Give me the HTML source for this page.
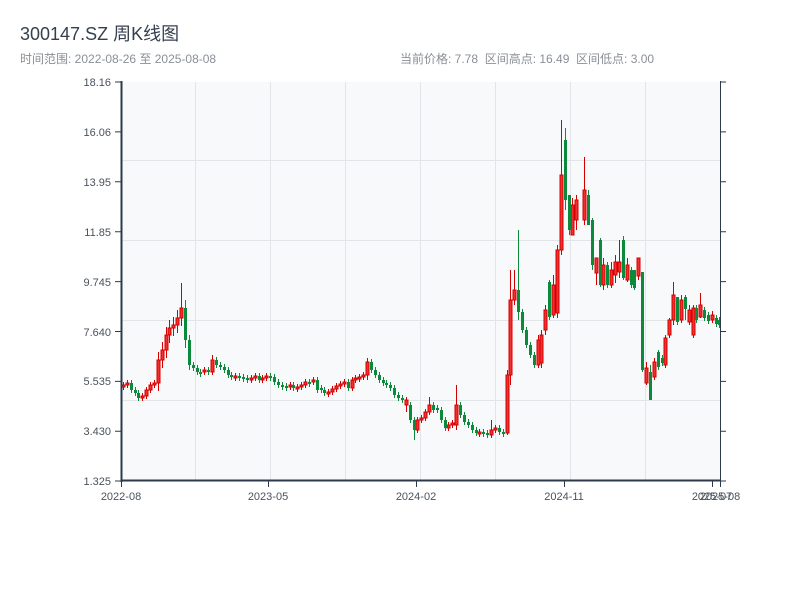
<!DOCTYPE html>
<html><head><meta charset="utf-8"><style>
body{margin:0;width:800px;height:600px;background:#fff;overflow:hidden;font-family:"Liberation Sans","Noto Sans CJK SC",sans-serif;}
.r rect{fill:#ee3030;stroke:#d40000;stroke-width:1}
.g rect{fill:#0a8a3a}
.r path{stroke:#d40000;stroke-width:1;fill:none}
.g path{stroke:#0a8a3a;stroke-width:1;fill:none}
</style></head><body>
<svg width="800" height="600" xmlns="http://www.w3.org/2000/svg" style="position:absolute;left:0;top:0">
<text x="20" y="40" font-size="18" fill="#34404f" font-family="Liberation Sans, Noto Sans CJK SC, sans-serif">300147.SZ 周K线图</text>
<text x="20" y="63" font-size="12" fill="#8a8f96" font-family="Liberation Sans, Noto Sans CJK SC, sans-serif">时间范围: 2022-08-26 至 2025-08-08</text>
<text x="400" y="63" font-size="12" fill="#8a8f96" font-family="Liberation Sans, Noto Sans CJK SC, sans-serif" xml:space="preserve">当前价格: 7.78  区间高点: 16.49  区间低点: 3.00</text>
<rect x="121" y="82" width="599" height="399" fill="#f7f9fb"/>
<g stroke="#e1e4e9" stroke-width="1">
<path d="M195.5 82V481M270.5 82V481M345.5 82V481M420.5 82V481M495.5 82V481M570.5 82V481M645.5 82V481M121 160.5H720M121 240.5H720M121 320.5H720M121 400.5H720" fill="none"/>
</g>
<g class="r">
<path d="M123.5 382V390M127.5 380V388M142.5 393V401M146.5 387V399M150.5 382V393M154.5 380V388M158.5 352V391M162.5 342V368M166.5 327V358M169.5 320V343M173.5 317V336M177.5 310V333M181.5 283V326M204.5 367V375M212.5 355V375M235.5 373V381M251.5 375V383M255.5 373V381M262.5 375V383M266.5 373V381M290.5 382V390M297.5 384V392M301.5 382V390M305.5 379V388M313.5 377V385M328.5 389V397M332.5 386V395M336.5 383V392M340.5 381V389M344.5 379V387M352.5 377V391M355.5 375V383M359.5 374V382M363.5 372V380M367.5 358V380M406.5 397V412M417.5 417V433M421.5 415V423M425.5 409V421M429.5 397V415M448.5 422V431M452.5 420V428M456.5 385V430M479.5 429V437M491.5 420V438M495.5 425V433M507.5 370V435M510.5 270V385M514.5 270V305M538.5 335V368M541.5 330V368M545.5 305V335M553.5 275V318M557.5 245V318M561.5 120V255M572.5 198V235M576.5 195V230M584.5 157V225M596.5 258V285M603.5 258V290M611.5 262V288M615.5 255V283M619.5 240V278M627.5 258V282M638.5 258V280M646.5 362V385M654.5 358V380M665.5 335V368M669.5 318V338M673.5 282V325M681.5 295V323M689.5 305V325M693.5 305V338M700.5 293V318M712.5 311V323"/>
<rect x="122" y="385" width="3" height="2"/><rect x="126" y="383" width="3" height="2"/><rect x="141" y="396" width="3" height="2"/><rect x="145" y="390" width="3" height="6"/><rect x="149" y="385" width="3" height="5"/><rect x="153" y="383" width="3" height="2"/><rect x="157" y="360" width="3" height="23"/><rect x="161" y="350" width="3" height="10"/><rect x="165" y="335" width="3" height="15"/><rect x="168" y="328" width="3" height="7"/><rect x="172" y="325" width="3" height="3"/><rect x="176" y="318" width="3" height="7"/><rect x="180" y="308" width="3" height="10"/><rect x="203" y="370" width="3" height="2"/><rect x="211" y="360" width="3" height="12"/><rect x="234" y="376" width="3" height="2"/><rect x="250" y="378" width="3" height="2"/><rect x="254" y="376" width="3" height="2"/><rect x="261" y="378" width="3" height="2"/><rect x="265" y="376" width="3" height="2"/><rect x="289" y="385" width="3" height="2"/><rect x="296" y="387" width="3" height="2"/><rect x="300" y="385" width="3" height="2"/><rect x="304" y="382" width="3" height="3"/><rect x="312" y="380" width="3" height="2"/><rect x="327" y="392" width="3" height="2"/><rect x="331" y="389" width="3" height="3"/><rect x="335" y="386" width="3" height="3"/><rect x="339" y="384" width="3" height="2"/><rect x="343" y="382" width="3" height="2"/><rect x="351" y="380" width="3" height="8"/><rect x="354" y="378" width="3" height="2"/><rect x="358" y="377" width="3" height="2"/><rect x="362" y="375" width="3" height="2"/><rect x="366" y="362" width="3" height="13"/><rect x="405" y="400" width="3" height="5"/><rect x="416" y="420" width="3" height="10"/><rect x="420" y="418" width="3" height="2"/><rect x="424" y="412" width="3" height="6"/><rect x="428" y="405" width="3" height="7"/><rect x="447" y="425" width="3" height="3"/><rect x="451" y="423" width="3" height="2"/><rect x="455" y="405" width="3" height="20"/><rect x="478" y="432" width="3" height="2"/><rect x="490" y="430" width="3" height="5"/><rect x="494" y="428" width="3" height="2"/><rect x="506" y="375" width="3" height="58"/><rect x="509" y="300" width="3" height="75"/><rect x="513" y="290" width="3" height="10"/><rect x="537" y="340" width="3" height="25"/><rect x="540" y="335" width="3" height="28"/><rect x="544" y="310" width="3" height="20"/><rect x="552" y="285" width="3" height="30"/><rect x="556" y="250" width="3" height="63"/><rect x="560" y="175" width="3" height="75"/><rect x="571" y="205" width="3" height="30"/><rect x="575" y="200" width="3" height="20"/><rect x="583" y="190" width="3" height="30"/><rect x="595" y="258" width="3" height="15"/><rect x="602" y="265" width="3" height="20"/><rect x="610" y="270" width="3" height="15"/><rect x="614" y="262" width="3" height="13"/><rect x="618" y="262" width="3" height="10"/><rect x="626" y="265" width="3" height="15"/><rect x="637" y="258" width="3" height="18"/><rect x="645" y="368" width="3" height="15"/><rect x="653" y="362" width="3" height="15"/><rect x="664" y="338" width="3" height="27"/><rect x="668" y="320" width="3" height="15"/><rect x="672" y="295" width="3" height="25"/><rect x="680" y="300" width="3" height="20"/><rect x="688" y="310" width="3" height="12"/><rect x="692" y="308" width="3" height="27"/><rect x="699" y="305" width="3" height="12"/><rect x="711" y="315" width="3" height="5"/>
</g>
<g class="g">
<path d="M131.5 380V393M135.5 387V396M138.5 390V401M185.5 300V348M189.5 335V370M193.5 362V371M197.5 365V375M200.5 369V377M208.5 367V375M216.5 357V368M220.5 362V370M224.5 364V373M228.5 367V378M231.5 372V380M239.5 373V381M243.5 374V382M247.5 375V383M259.5 373V383M270.5 373V381M274.5 374V385M278.5 379V388M282.5 382V390M286.5 383V391M293.5 382V391M309.5 379V387M317.5 377V393M321.5 385V393M324.5 387V396M348.5 379V391M371.5 359V373M375.5 367V378M379.5 372V383M383.5 377V386M386.5 380V388M390.5 382V391M394.5 385V398M398.5 392V401M402.5 395V403M410.5 402V423M414.5 417V440M433.5 402V413M437.5 405V413M441.5 407V423M445.5 417V431M460.5 402V418M464.5 412V425M468.5 419V428M472.5 422V433M476.5 427V436M483.5 429V437M487.5 430V438M499.5 425V435M503.5 429V437M518.5 230V320M522.5 309V333M526.5 327V348M530.5 342V358M534.5 352V368M549.5 280V320M565.5 128V210M569.5 195V235M588.5 190V225M592.5 218V270M600.5 238V287M607.5 262V288M623.5 236V280M631.5 267V288M634.5 270V290M642.5 272V372M650.5 365V400M658.5 350V370M662.5 355V366M677.5 297V325M685.5 295V320M696.5 305V323M704.5 307V321M708.5 312V324M716.5 315V327M719.5 317V328"/>
<rect x="130" y="383" width="3" height="7"/><rect x="134" y="390" width="3" height="3"/><rect x="137" y="393" width="3" height="5"/><rect x="184" y="308" width="3" height="32"/><rect x="188" y="340" width="3" height="25"/><rect x="192" y="365" width="3" height="3"/><rect x="196" y="368" width="3" height="4"/><rect x="199" y="372" width="3" height="2"/><rect x="207" y="370" width="3" height="2"/><rect x="215" y="360" width="3" height="5"/><rect x="219" y="365" width="3" height="2"/><rect x="223" y="367" width="3" height="3"/><rect x="227" y="370" width="3" height="5"/><rect x="230" y="375" width="3" height="2"/><rect x="238" y="376" width="3" height="2"/><rect x="242" y="377" width="3" height="2"/><rect x="246" y="378" width="3" height="2"/><rect x="258" y="376" width="3" height="4"/><rect x="269" y="376" width="3" height="2"/><rect x="273" y="377" width="3" height="5"/><rect x="277" y="382" width="3" height="3"/><rect x="281" y="385" width="3" height="2"/><rect x="285" y="386" width="3" height="2"/><rect x="292" y="385" width="3" height="3"/><rect x="308" y="382" width="3" height="2"/><rect x="316" y="380" width="3" height="10"/><rect x="320" y="388" width="3" height="2"/><rect x="323" y="390" width="3" height="3"/><rect x="347" y="382" width="3" height="6"/><rect x="370" y="362" width="3" height="8"/><rect x="374" y="370" width="3" height="5"/><rect x="378" y="375" width="3" height="5"/><rect x="382" y="380" width="3" height="3"/><rect x="385" y="383" width="3" height="2"/><rect x="389" y="385" width="3" height="3"/><rect x="393" y="388" width="3" height="7"/><rect x="397" y="395" width="3" height="3"/><rect x="401" y="398" width="3" height="2"/><rect x="409" y="405" width="3" height="15"/><rect x="413" y="420" width="3" height="10"/><rect x="432" y="405" width="3" height="5"/><rect x="436" y="408" width="3" height="2"/><rect x="440" y="410" width="3" height="10"/><rect x="444" y="420" width="3" height="8"/><rect x="459" y="405" width="3" height="10"/><rect x="463" y="415" width="3" height="7"/><rect x="467" y="422" width="3" height="3"/><rect x="471" y="425" width="3" height="5"/><rect x="475" y="430" width="3" height="3"/><rect x="482" y="432" width="3" height="2"/><rect x="486" y="433" width="3" height="2"/><rect x="498" y="428" width="3" height="4"/><rect x="502" y="432" width="3" height="2"/><rect x="517" y="290" width="3" height="22"/><rect x="521" y="312" width="3" height="18"/><rect x="525" y="330" width="3" height="15"/><rect x="529" y="345" width="3" height="10"/><rect x="533" y="355" width="3" height="10"/><rect x="548" y="282" width="3" height="35"/><rect x="564" y="140" width="3" height="60"/><rect x="568" y="195" width="3" height="35"/><rect x="587" y="195" width="3" height="30"/><rect x="591" y="220" width="3" height="45"/><rect x="599" y="240" width="3" height="45"/><rect x="606" y="265" width="3" height="20"/><rect x="622" y="240" width="3" height="38"/><rect x="630" y="270" width="3" height="15"/><rect x="633" y="270" width="3" height="18"/><rect x="641" y="272" width="3" height="98"/><rect x="649" y="372" width="3" height="28"/><rect x="657" y="352" width="3" height="15"/><rect x="661" y="358" width="3" height="5"/><rect x="676" y="297" width="3" height="25"/><rect x="684" y="297" width="3" height="12"/><rect x="695" y="308" width="3" height="12"/><rect x="703" y="310" width="3" height="8"/><rect x="707" y="315" width="3" height="6"/><rect x="715" y="318" width="3" height="6"/><rect x="718" y="320" width="3" height="5"/>
</g>
<g stroke="#2d3a4a" fill="none">
<path d="M121.5 81V482" stroke-width="2"/>
<path d="M121 480.5H721" stroke-width="2"/>
<path d="M720.5 81V482"/>
<path d="M115 82H121M115 131.9H121M115 181.8H121M115 231.7H121M115 281.6H121M115 331.5H121M115 381.4H121M115 431.3H121M115 481H121M720 82H726M720 131.9H726M720 181.8H726M720 231.7H726M720 281.6H726M720 331.5H726M720 381.4H726M720 431.3H726M720 481H726M121.5 481V487M268.5 481V487M416.5 481V487M564.5 481V487M712.5 481V487M720.5 481V487"/>
</g>
<g font-size="11" fill="#4a525c" font-family="Liberation Sans, sans-serif" text-anchor="end">
<text x="111" y="86">18.16</text><text x="111" y="136">16.06</text><text x="111" y="186">13.95</text><text x="111" y="236">11.85</text><text x="111" y="286">9.745</text><text x="111" y="336">7.640</text><text x="111" y="385">5.535</text><text x="111" y="435">3.430</text><text x="111" y="485">1.325</text>
</g>
<g font-size="11" fill="#4a525c" font-family="Liberation Sans, sans-serif" text-anchor="middle">
<text x="121" y="500">2022-08</text><text x="268" y="500">2023-05</text><text x="416" y="500">2024-02</text><text x="564" y="500">2024-11</text><text x="712" y="500">2025-07</text><text x="720" y="500">2025-08</text>
</g>
</svg>
</body></html>
